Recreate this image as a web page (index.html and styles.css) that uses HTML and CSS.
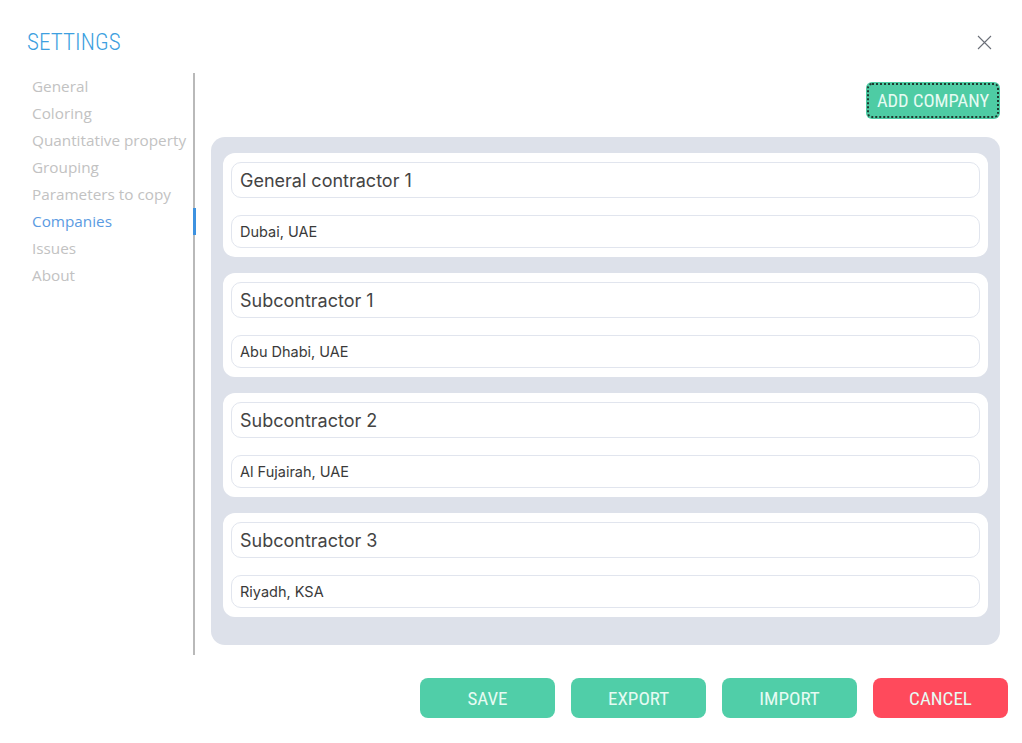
FILE: index.html
```html
<!DOCTYPE html>
<html lang="en">
<head>
<meta charset="utf-8">
<title>Settings</title>
<link rel="stylesheet" href="styles.css">
</head>
<body>
<div class="dialog">
  <header class="dialog-head">
    <h1 class="title">SETTINGS</h1>
    <button class="close" aria-label="Close">
      <svg width="15" height="15" viewBox="0 0 15 15"><path d="M1 1 L14 14 M14 1 L1 14" stroke="#6b6f78" stroke-width="1.1" fill="none"/></svg>
    </button>
  </header>
  <div class="dialog-body">
    <nav class="side">
      <a class="side-item">General</a>
      <a class="side-item">Coloring</a>
      <a class="side-item">Quantitative property</a>
      <a class="side-item">Grouping</a>
      <a class="side-item">Parameters to copy</a>
      <a class="side-item active">Companies</a>
      <a class="side-item">Issues</a>
      <a class="side-item">About</a>
    </nav>
    <main class="content">
      <div class="toolbar">
        <button class="btn btn-add">ADD COMPANY</button>
      </div>
      <div class="list">
        <div class="card">
          <input class="field field-name" value="General contractor 1">
          <input class="field field-place" value="Dubai, UAE">
        </div>
        <div class="card">
          <input class="field field-name" value="Subcontractor 1">
          <input class="field field-place" value="Abu Dhabi, UAE">
        </div>
        <div class="card">
          <input class="field field-name" value="Subcontractor 2">
          <input class="field field-place" value="Al Fujairah, UAE">
        </div>
        <div class="card">
          <input class="field field-name" value="Subcontractor 3">
          <input class="field field-place" value="Riyadh, KSA">
        </div>
      </div>
    </main>
  </div>
  <footer class="actions">
    <button class="btn btn-green">SAVE</button>
    <button class="btn btn-green">EXPORT</button>
    <button class="btn btn-green">IMPORT</button>
    <button class="btn btn-red">CANCEL</button>
  </footer>
</div>
</body>
</html>
```
FILE: styles.css
```css
html, body {
  margin: 0;
  padding: 0;
  background: #ffffff;
}

body {
  width: 1022px;
  height: 743px;
  overflow: hidden;
  font-family: "Open Sans", "Noto Sans", sans-serif;
}

* { box-sizing: border-box; }

.dialog {
  display: flex;
  flex-direction: column;
  padding: 0 14px 0 0;
}

.dialog-head {
  display: flex;
  justify-content: space-between;
  align-items: center;
  padding: 30px 16px 0 27px;
  height: 55px;
}

.title {
  margin: 0;
  font-family: "Roboto Condensed", "Liberation Sans Narrow", "DejaVu Sans Condensed", sans-serif;
  font-weight: 300;
  font-size: 23px;
  color: #3d9fe0;
  letter-spacing: 0.1px;
}

.close {
  border: none;
  background: none;
  padding: 0;
  width: 15px;
  height: 15px;
}

.close svg { display: block; }

.dialog-body {
  display: flex;
  margin-top: 18px;
  height: 582px;
}

.side {
  width: 195px;
  flex: none;
  padding-left: 32px;
  display: flex;
  flex-direction: column;
  border-right: 2px solid #b9b9b9;
}

.side-item {
  font-size: 15.3px;
  line-height: 27px;
  color: #c2c2c2;
  white-space: nowrap;
  position: relative;
}

.side-item.active {
  color: #5b9be2;
}

.side-item.active::after {
  content: "";
  position: absolute;
  right: -3px;
  top: 0;
  width: 3px;
  height: 27px;
  background: #3d92e0;
}

.content {
  flex: 1;
  padding-left: 16px;
  display: flex;
  flex-direction: column;
}

.toolbar {
  display: flex;
  justify-content: flex-end;
  padding-top: 9px;
  margin-right: 8px;
}

.btn {
  border: none;
  font-family: "Roboto Condensed", "Liberation Sans Narrow", "DejaVu Sans Condensed", sans-serif;
  font-weight: 400;
  font-size: 19px;
  color: #e6fbf3;
  cursor: pointer;
}

.btn-add {
  width: 134px;
  height: 37px;
  background: #4ecca4;
  border-radius: 6px;
  font-size: 18.5px;
  outline: 2px dotted #1f3a30;
  outline-offset: -3px;
}

.list {
  margin-top: 18px;
  margin-right: 8px;
  background: #dde1ea;
  border-radius: 14px;
  padding: 16px 12px 28px 12px;
  display: flex;
  flex-direction: column;
  gap: 16px;
}

.card {
  background: #ffffff;
  border-radius: 12px;
  padding: 9px 8px 9px 8px;
  display: flex;
  flex-direction: column;
  gap: 17px;
}

.field {
  border: 1px solid #e1e5ee;
  border-radius: 10px;
  background: #ffffff;
  color: #444444;
  font-family: "Inter", "Roboto", sans-serif;
  font-weight: 400;
  padding: 0 8px;
  outline: none;
}

.field-name {
  height: 36px;
  font-size: 18px;
}

.field-place {
  height: 33px;
  font-size: 14.5px;
  color: #3a3a3a;
}

.actions {
  display: flex;
  justify-content: flex-end;
  gap: 16px;
  margin-top: 23px;
}

.btn-green,
.btn-red {
  width: 135px;
  height: 40px;
  border-radius: 8px;
}

.btn-green { background: #50cea8; }
.btn-red { background: #ff4a5c; }
```
